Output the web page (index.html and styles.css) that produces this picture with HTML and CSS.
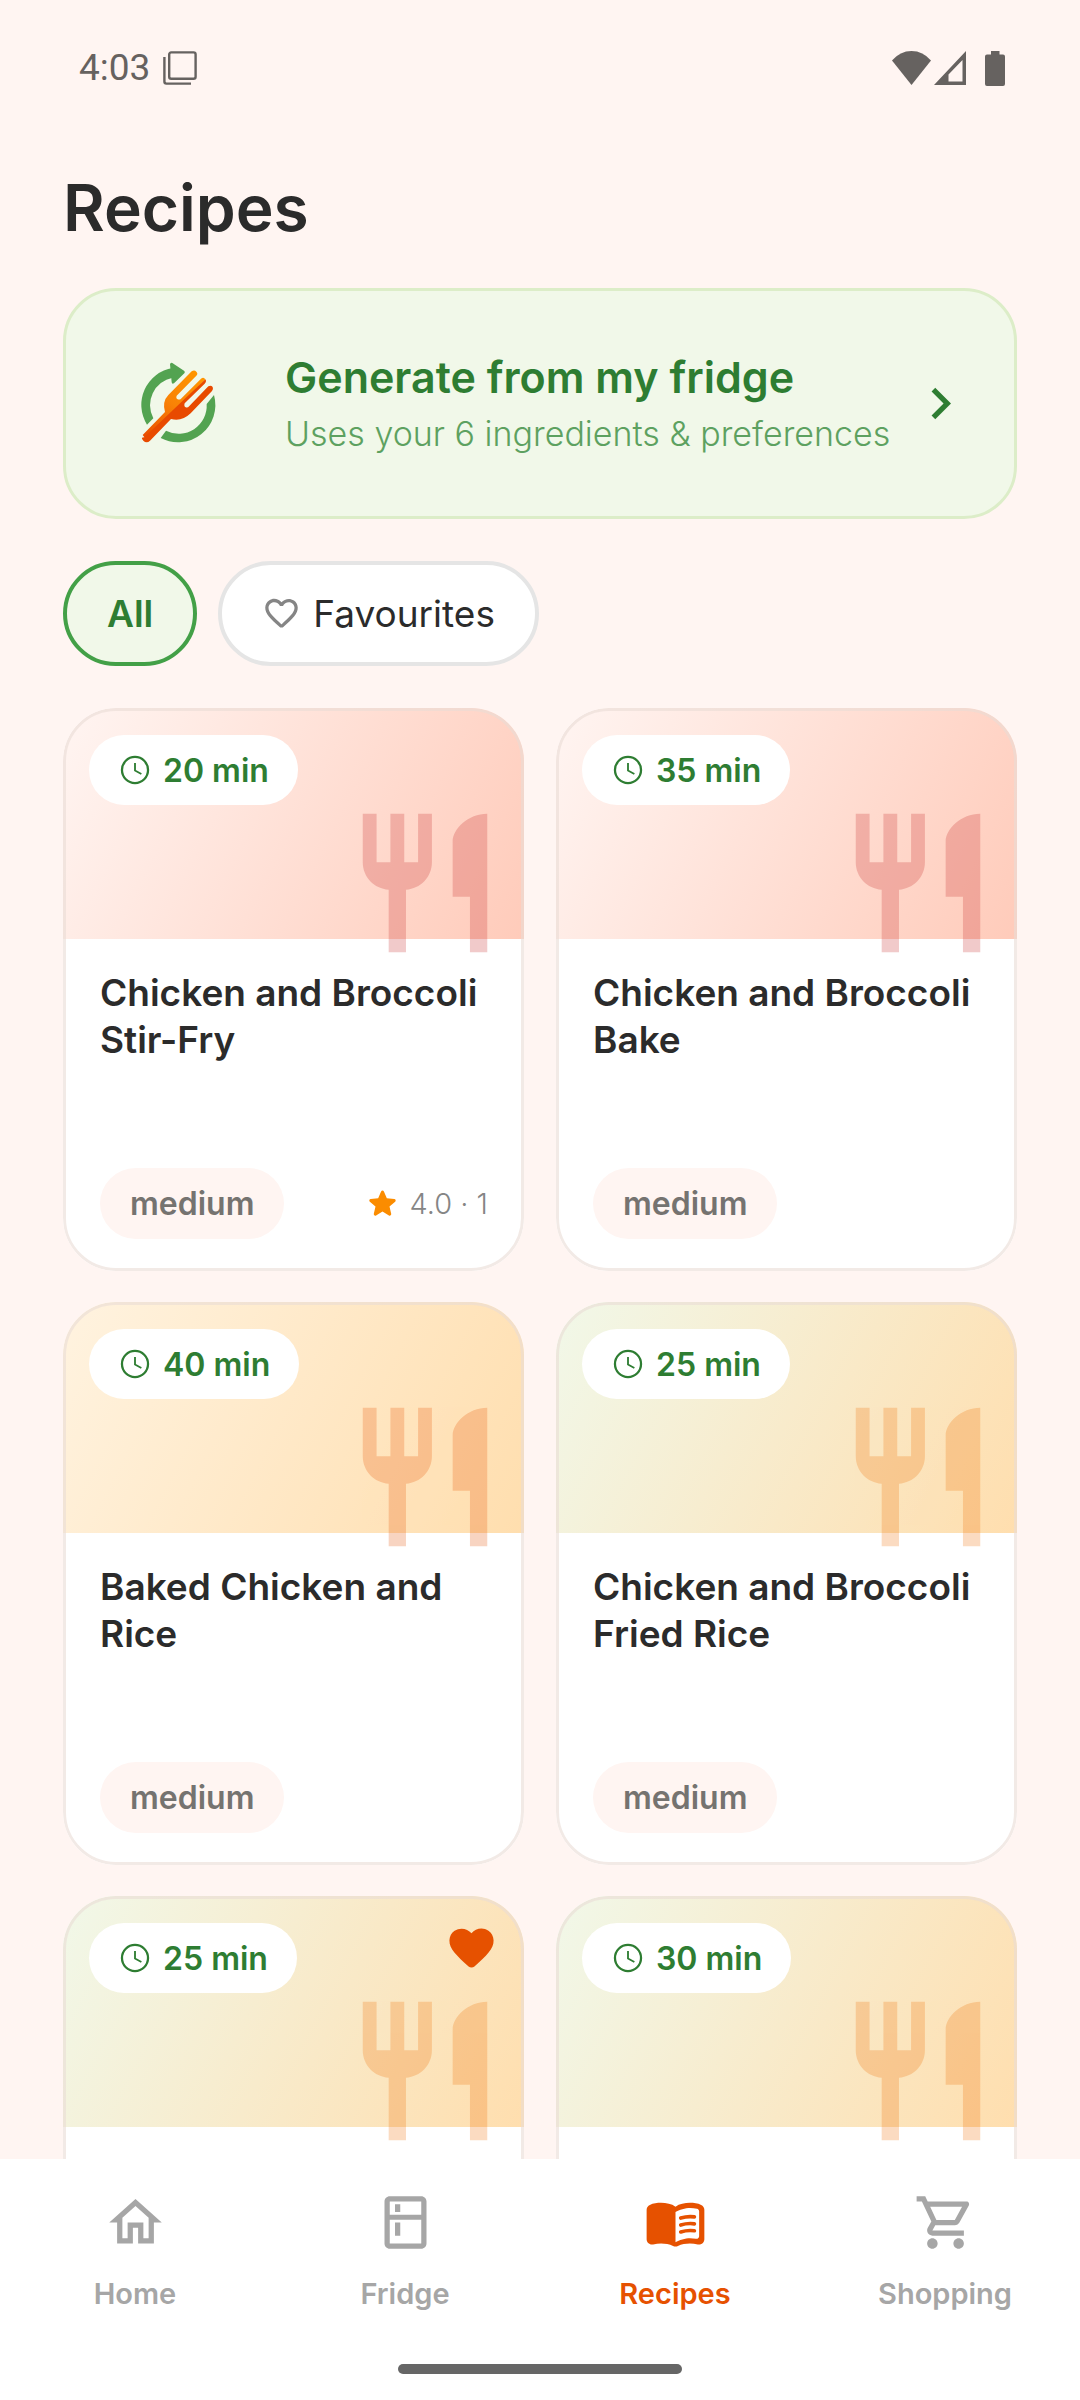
FILE: index.html
```html
<!DOCTYPE html>
<html lang="en">
<head>
<meta charset="utf-8">
<meta name="viewport" content="width=device-width, initial-scale=1">
<title>Recipes</title>
<link rel="stylesheet" href="styles.css">
</head>
<body>
<svg class="sprite" aria-hidden="true">
  <symbol id="clock" viewBox="0 0 24 24"><circle cx="12" cy="12" r="9.2" fill="none" stroke="currentColor" stroke-width="1.6"/><path d="M12 7v5.4l4.5 2.4" fill="none" stroke="currentColor" stroke-width="1.3"/></symbol>
  <symbol id="cutlery" viewBox="0 0 24 24"><path d="M11 9H9V2H7v7H5V2H3v7c0 2.12 1.66 3.84 3.75 3.97V22h2.5v-9.03C11.34 12.84 13 11.12 13 9V2h-2v7zm5-3v8h2.5v8H21V2c-2.76 0-5 2.24-5 4z"/></symbol>
  <symbol id="heart" viewBox="0 0 24 24"><path d="M13.35 20.13c-.76.69-1.93.69-2.69-.01l-.11-.1C5.3 15.27 1.87 12.16 2 8.28c.06-1.7.93-3.33 2.34-4.29 2.64-1.8 5.9-.96 7.66 1.1 1.76-2.06 5.02-2.91 7.66-1.1 1.41.96 2.28 2.59 2.34 4.29.14 3.88-3.3 6.99-8.55 11.76l-.1.09z"/></symbol>
</svg>
<div class="app">
  <div class="status-bar">
    <div class="status-group">
      <span class="status-time">4:03</span>
      <svg class="status-window" viewBox="0 0 34 34" fill="none" stroke="currentColor" stroke-width="2.4"><rect x="6.2" y="1.4" width="26.4" height="26.4" rx="2"/><path d="M1.4 6v24.6q0 2 2 2H28"/></svg>
    </div>
    <div class="status-group status-right">
      <svg class="status-wifi" viewBox="0 0 39 34"><path d="M0 9.5Q8 0 19.5 0T39 9.5L19.5 34z"/></svg>
      <svg class="status-signal" viewBox="0 0 32 34"><path fill-rule="evenodd" d="M32 0v34H0zM28.500 9L14.500 23.500v7h14z"/></svg>
      <svg class="status-battery" viewBox="0 0 20 35"><path d="M6 0h8.500v3.500H18q2 0 2 2V33q0 2-2 2H2q-2 0-2-2V5.500q0-2 2-2h4z"/></svg>
    </div>
  </div>

  <main class="content">
    <h1 class="page-title">Recipes</h1>

    <button class="banner" type="button">
      <svg class="banner-logo" viewBox="0 0 300 300">
        <defs>
          <linearGradient id="forkLight" x1="0" y1="1" x2=".8" y2="0"><stop offset="0" stop-color="#e84a00"/><stop offset=".55" stop-color="#f98306"/><stop offset="1" stop-color="#ff9500"/></linearGradient>
        </defs>
        <g fill="#53a351">
          <path d="M128 42A112 112 0 0 0 51 212L70 193A84 84 0 0 1 128 71z"/>
          <path d="M252 123A112 112 0 0 1 92 252L108 230A84 84 0 0 0 230 150z"/>
          <path d="M120 31q1-6 7-4l35 23q5 3 1 8l-31 30q-6 4-7-3z"/>
        </g>
        <path fill="url(#forkLight)" d="M185 52Q193 46 199 53 205 59 199 65L140 125Q137 133 143 136 149 138 153 134L213 74Q221 68 226 76L48 256 38 243 105 174Q96 143 115 123z"/>
        <path fill="#e84a00" d="M226 76Q231 82 224 89L164 148Q161 157 167 160 173 162 178 156L235 97Q243 92 248 99 251 106 246 111L182 178Q155 204 123 195L60 260Q50 269 40 260 30 250 43 250z"/>
      </svg>
      <span class="banner-text">
        <span class="banner-title">Generate from my fridge</span>
        <span class="banner-subtitle">Uses your 6 ingredients &amp; preferences</span>
      </span>
      <svg class="banner-chevron" viewBox="0 0 24 24"><path d="M10 6L8.590 7.410 13.170 12l-4.580 4.590L10 18l6-6z"/></svg>
    </button>

    <div class="filters">
      <button class="chip chip-active" type="button">All</button>
      <button class="chip" type="button">
        <svg class="chip-icon" viewBox="0 0 24 24"><path d="M19.660 3.990c-2.640-1.800-5.900-.960-7.660 1.100-1.760-2.060-5.020-2.910-7.660-1.100-1.400.960-2.280 2.580-2.340 4.290-.140 3.880 3.300 6.990 8.550 11.760l.1.090c.76.690 1.930.690 2.690-.01l.11-.1c5.250-4.760 8.680-7.870 8.550-11.750-.06-1.700-.94-3.320-2.340-4.280zM12.100 18.550l-.1.1-.1-.1C7.140 14.240 4 11.390 4 8.500 4 6.500 5.500 5 7.500 5c1.540 0 3.040.99 3.570 2.360h1.870C13.460 5.990 14.960 5 16.500 5c2 0 3.500 1.500 3.500 3.500 0 2.890-3.140 5.740-7.900 10.050z"/></svg>
        Favourites
      </button>
    </div>

    <div class="recipe-grid">
      <article class="card card-red">
        <div class="card-cover"><span class="badge"><svg><use href="#clock"/></svg>20 min</span><svg class="cutlery"><use href="#cutlery"/></svg></div>
        <div class="card-body">
          <h2 class="card-title">Chicken and Broccoli Stir-Fry</h2>
          <div class="card-footer"><span class="level">medium</span><span class="rating"><svg viewBox="0 0 24 24"><path d="M12 17.270l4.150 2.510c.76.460 1.690-.22 1.490-1.080l-1.100-4.720 3.670-3.180c.67-.58.31-1.680-.57-1.750l-4.830-.41-1.890-4.460c-.34-.81-1.500-.81-1.840 0L9.190 8.630l-4.830.41c-.88.070-1.240 1.170-.57 1.750l3.670 3.180-1.100 4.720c-.2.860.73 1.540 1.490 1.080z"/></svg>4.0 · 1</span></div>
        </div>
      </article>
      <article class="card card-red">
        <div class="card-cover"><span class="badge"><svg><use href="#clock"/></svg>35 min</span><svg class="cutlery"><use href="#cutlery"/></svg></div>
        <div class="card-body">
          <h2 class="card-title">Chicken and Broccoli Bake</h2>
          <div class="card-footer"><span class="level">medium</span></div>
        </div>
      </article>
      <article class="card card-orange">
        <div class="card-cover"><span class="badge"><svg><use href="#clock"/></svg>40 min</span><svg class="cutlery"><use href="#cutlery"/></svg></div>
        <div class="card-body">
          <h2 class="card-title">Baked Chicken and Rice</h2>
          <div class="card-footer"><span class="level">medium</span></div>
        </div>
      </article>
      <article class="card card-green">
        <div class="card-cover"><span class="badge"><svg><use href="#clock"/></svg>25 min</span><svg class="cutlery"><use href="#cutlery"/></svg></div>
        <div class="card-body">
          <h2 class="card-title">Chicken and Broccoli Fried Rice</h2>
          <div class="card-footer"><span class="level">medium</span></div>
        </div>
      </article>
      <article class="card card-green">
        <div class="card-cover"><span class="badge"><svg><use href="#clock"/></svg>25 min</span><svg class="favourite" role="img" aria-label="Favourite"><use href="#heart"/></svg><svg class="cutlery"><use href="#cutlery"/></svg></div>
        <div class="card-body"></div>
      </article>
      <article class="card card-green">
        <div class="card-cover"><span class="badge"><svg><use href="#clock"/></svg>30 min</span><svg class="cutlery"><use href="#cutlery"/></svg></div>
        <div class="card-body"></div>
      </article>
    </div>
  </main>

  <nav class="tab-bar">
    <div class="tabs">
      <a class="tab" href="#home"><svg viewBox="0 0 24 24"><path d="M12 5.690l5 4.500V18h-2v-6H9v6H7v-7.810l5-4.500M12 3L2 12h3v8h6v-6h2v6h6v-8h3L12 3z"/></svg>Home</a>
      <a class="tab" href="#fridge"><svg viewBox="0 0 24 24"><path d="M18 2.010L6 2c-1.100 0-2 .89-2 2v16c0 1.100.9 2 2 2h12c1.100 0 2-.9 2-2V4c0-1.110-.9-1.990-2-1.990zM18 20H6v-9.020h12V20zm0-11H6V4h12v5zM8 5h2v3H8zm0 7h2v5H8z"/></svg>Fridge</a>
      <a class="tab tab-active" href="#recipes" aria-current="page"><svg viewBox="0 0 24 24"><path d="M17.500 4.500c-1.950 0-4.050.4-5.500 1.500-1.450-1.100-3.550-1.500-5.500-1.500-1.450 0-2.990.22-4.280.79C1.490 5.620 1 6.330 1 7.140v11.280c0 1.300 1.220 2.260 2.480 1.940.98-.25 2.020-.36 3.020-.36 1.560 0 3.220.26 4.560.92.6.3 1.280.3 1.870 0 1.340-.67 3-.92 4.560-.92 1 0 2.040.11 3.020.36 1.260.33 2.480-.63 2.480-1.940V7.140c0-.81-.49-1.520-1.220-1.850-1.280-.57-2.820-.79-4.270-.79zM21 17.230c0 .63-.58 1.090-1.200.98-.75-.14-1.530-.2-2.300-.2-1.700 0-4.150.65-5.500 1.500V8c1.350-.85 3.800-1.500 5.500-1.500.92 0 1.830.09 2.700.28.46.1.8.51.8.98z"/><path d="M14 10.300q2.600-.8 5.200-.45M14 12.950q2.600-.8 5.200-.45M14 15.600q2.600-.8 5.200-.45" fill="none" stroke="currentColor" stroke-width="1.400" stroke-linecap="round"/></svg>Recipes</a>
      <a class="tab" href="#shopping"><svg viewBox="0 0 24 24"><path d="M15.550 13c.75 0 1.410-.41 1.750-1.030l3.580-6.490c.37-.66-.11-1.480-.87-1.480H5.210l-.94-2H1v2h2l3.600 7.590-1.350 2.440C4.520 15.370 5.480 17 7 17h12v-2H7l1.100-2h7.450zM6.160 6h12.150l-2.760 5H8.530L6.160 6zM7 18c-1.100 0-1.990.9-1.990 2S5.900 22 7 22s2-.9 2-2-.9-2-2-2zm10 0c-1.100 0-1.990.9-1.990 2s.89 2 1.990 2 2-.9 2-2-.9-2-2-2z"/></svg>Shopping</a>
    </div>
    <div class="home-indicator"></div>
  </nav>
</div>
</body>
</html>
```
FILE: styles.css
```css
* {
  box-sizing: border-box;
}

body {
  margin: 0;
  background: #fff5f2;
  color: #2b2b2b;
  font-family: Inter, "Open Sans", sans-serif;
}

svg {
  display: block;
  flex: none;
  fill: currentColor;
}

button {
  font: inherit;
  color: inherit;
  cursor: pointer;
}

h1,
h2 {
  margin: 0;
  font-weight: 600;
}

.sprite {
  display: none;
}

.app {
  display: flex;
  flex-direction: column;
  height: 100vh;
}

/* Status bar */

.status-bar {
  flex: none;
  display: flex;
  align-items: center;
  justify-content: space-between;
  height: 136px;
  padding: 0 75px 0 79px;
  color: #666260;
}

.status-group {
  display: flex;
  align-items: center;
  gap: 13px;
}

.status-right {
  gap: 3px;
}

.status-time {
  font-family: Roboto, sans-serif;
  font-size: 37px;
  line-height: 44px;
}

.status-window {
  width: 34px;
  height: 34px;
  fill: none;
}

.status-wifi {
  width: 39px;
  height: 34px;
}

.status-signal {
  width: 32px;
  height: 34px;
}

.status-battery {
  width: 20px;
  height: 35px;
  margin-left: 16px;
}

/* Content */

.content {
  flex: 1;
  min-height: 0;
  overflow-y: auto;
  scrollbar-width: none;
  padding: 32px 63px;
}

.page-title {
  font-size: 64px;
  line-height: 80px;
  margin-bottom: 40px;
}

.banner {
  display: flex;
  align-items: center;
  width: 100%;
  min-height: 231px;
  padding: 0 42px 0 64px;
  border: 3px solid #dcedc8;
  border-radius: 53px;
  background: #f1f8e9;
  color: #2e7d32;
  text-align: left;
}

.banner-logo {
  width: 100px;
  height: 100px;
}

.banner-text {
  flex: 1;
  display: flex;
  flex-direction: column;
  gap: 8px;
  margin-left: 55px;
  white-space: nowrap;
}

.banner-title {
  font-size: 43px;
  font-weight: 600;
  line-height: 52px;
}

.banner-subtitle {
  font-size: 34px;
  font-weight: 300;
  line-height: 46px;
  color: #5da160;
}

.banner-chevron {
  width: 63px;
  height: 63px;
}

.filters {
  display: flex;
  gap: 21px;
  margin: 42px 0;
}

.chip {
  display: flex;
  align-items: center;
  gap: 12px;
  height: 105px;
  padding: 0 40px;
  border: 4px solid #e5e5e5;
  border-radius: 53px;
  background: #fff;
  font-size: 37px;
}

.chip-active {
  border-color: #43a047;
  background: #f1f8e9;
  color: #2e7d32;
  font-weight: 600;
}

.chip-icon {
  width: 39px;
  height: 39px;
  color: #858585;
}

/* Recipe cards */

.recipe-grid {
  display: grid;
  grid-template-columns: repeat(2, minmax(0, 1fr));
  grid-auto-rows: minmax(563px, auto);
  gap: 31px 32px;
}

.card {
  position: relative;
  display: flex;
  flex-direction: column;
  border-radius: 53px;
  background: #fff;
  overflow: hidden;
}

.card::after {
  content: "";
  position: absolute;
  inset: 0;
  border: 3px solid rgba(234, 220, 214, 0.6);
  border-radius: 53px;
  pointer-events: none;
}

.card-cover {
  position: relative;
  flex: none;
  height: 231px;
  padding: 27px 26px;
}

.card-red .card-cover {
  background: linear-gradient(117deg, #fff5f2, #ffcbba);
  color: #c62828;
}

.card-orange .card-cover {
  background: linear-gradient(117deg, #fff3e0, #ffdeae);
  color: #e65100;
}

.card-green .card-cover {
  background: linear-gradient(117deg, #f1f8e9, #ffdeae);
  color: #ef6c00;
}

.cutlery {
  position: absolute;
  right: 16px;
  bottom: -27px;
  width: 166px;
  height: 166px;
  opacity: 0.24;
}

.favourite {
  position: absolute;
  top: 26px;
  right: 26px;
  width: 53px;
  height: 53px;
  color: #e65100;
}

.badge {
  display: inline-flex;
  align-items: center;
  gap: 11px;
  height: 70px;
  padding: 0 29px;
  border-radius: 35px;
  background: #fff;
  color: #2e7d32;
  font-size: 32px;
  font-weight: 600;
}

.badge svg {
  width: 34px;
  height: 34px;
}

.card-body {
  flex: 1;
  display: flex;
  flex-direction: column;
  justify-content: space-between;
  padding: 30px 32px 32px 37px;
}

.card-title {
  font-size: 37px;
  line-height: 47px;
}

.card-footer {
  display: flex;
  align-items: center;
  justify-content: space-between;
}

.level {
  height: 71px;
  padding: 0 30px;
  border-radius: 36px;
  background: #fff5f2;
  color: #757370;
  font-size: 32px;
  font-weight: 600;
  line-height: 71px;
}

.rating {
  display: flex;
  align-items: center;
  gap: 8px;
  margin-right: 4px;
  color: #858585;
  font-size: 29px;
  font-weight: 300;
}

.rating svg {
  width: 37px;
  height: 37px;
  color: #fb8c00;
}

/* Bottom navigation */

.tab-bar {
  flex: none;
  display: flex;
  flex-direction: column;
  align-items: center;
  justify-content: space-between;
  height: 241px;
  padding: 32px 0 26px;
  background: #fff;
}

.tabs {
  display: flex;
  width: 100%;
}

.tab {
  flex: 1;
  display: flex;
  flex-direction: column;
  align-items: center;
  gap: 20px;
  color: #a6a6a6;
  font-size: 29px;
  font-weight: 600;
  line-height: 40px;
  text-decoration: none;
}

.tab svg {
  width: 63px;
  height: 63px;
}

.tab-active {
  color: #e65100;
}

.home-indicator {
  width: 284px;
  height: 10px;
  border-radius: 5px;
  background: #666;
}
```
